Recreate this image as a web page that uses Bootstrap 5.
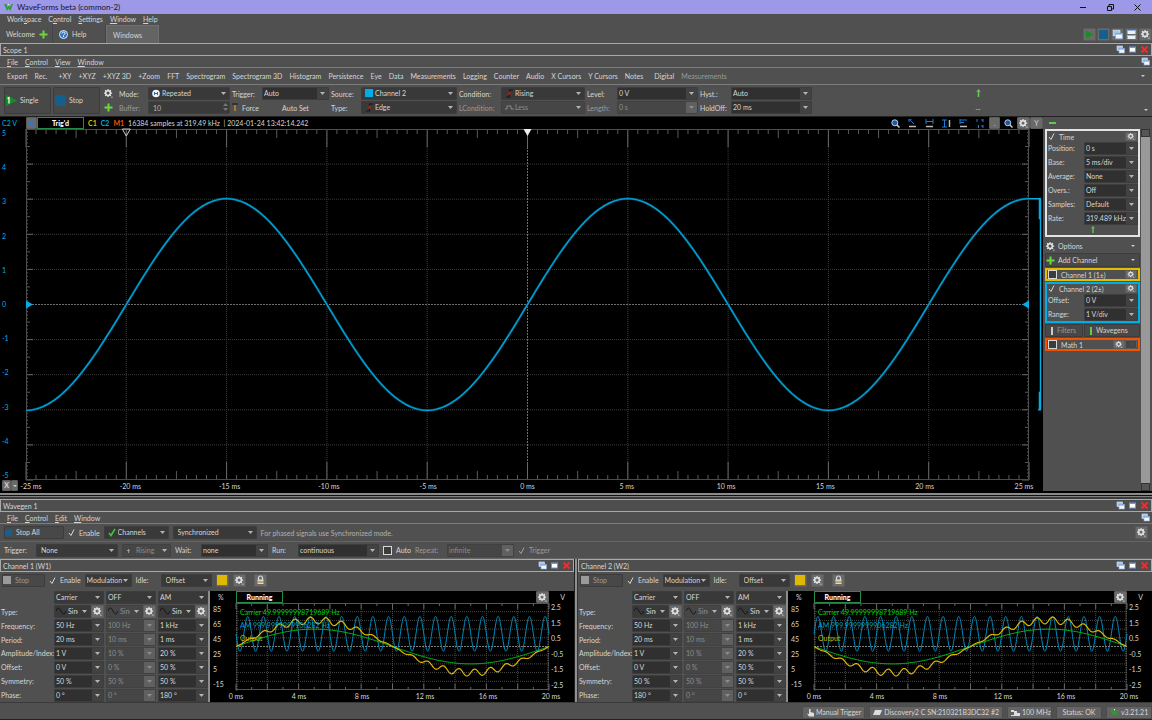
<!DOCTYPE html>
<html lang="en" data-bs-theme="dark">
<head>
<meta charset="utf-8">
<meta name="viewport" content="width=device-width, initial-scale=1">
<title>WaveForms beta (common-2)</title>
<link href="https://cdn.jsdelivr.net/npm/bootstrap@5.3.0/dist/css/bootstrap.min.css" rel="stylesheet">
<style>
:root{--bg:#505050;--line:#7c7c7c;--edge:#a8a8a8;--fg:#d6d6d6;--dim:#9a9a9a;--field:#303030;--cyan:#00aee6;--yellow:#e6bb00}
body{background:var(--bg);color:var(--fg);font:7px/12px Lato,"Liberation Sans",sans-serif;min-height:100vh}
svg{display:block;flex:none}
a{color:inherit;text-decoration:none}
button,input,select{font:inherit;color:inherit}
.ico{width:9px;height:9px}
.titlebar{height:14px;background:#9e98e8;color:#15152a;font-size:8px;padding-right:1px}
.titlebar button{background:none;border:0;width:27px;padding:0;color:#111}
.menu-row{height:12px;padding:0 2px 0 7px;gap:7px}
.menu-row.app-menu{height:11px;line-height:11px}
.menu-row.ruled{border-bottom:1px solid var(--line)}
.tab-row{height:18px}
.tab-row .nav-link{padding:0 6px;color:inherit;border-right:1px solid #444;width:53px;border-radius:0}
.tab-row .nav-link.active{background:#646464;border:1px solid #707070;border-bottom:0}
.tab-tools{gap:1px}
.dock-title{height:13px;border:1px solid var(--edge);padding:0 2px;background:#4e4e4e;font-size:7px}
.dock-icons{gap:3px}
.dock-icons button,.plain-btn{border:0;background:none;padding:0}
.tool-row{height:17px;border-bottom:1px solid var(--line);padding:0 7px}
.tool-list{width:720px}
.tool-list button{border:0;background:none;padding:0}
.dim{color:var(--dim)}
.btn.app-btn{--bs-btn-padding-x:4px;--bs-btn-padding-y:0;--bs-btn-font-size:7px;--bs-btn-border-radius:1px;line-height:11px;height:13px;color:var(--fg);background:#484848;border:1px solid #3c3c3c;text-align:left}
.btn.app-btn.dim{color:var(--dim)}
.btn.sq{width:13px;padding:0;display:flex;align-items:center;justify-content:center;background:#6a6a6a;border-color:#5c5c5c}
.btn.low{height:12px}
.btn.slim{width:11px}
.form-select,.form-control{height:13px;min-height:0;padding:0 12px 0 4px;font-size:7px;line-height:11px;border:1px solid #3d3d3d;border-radius:1px;color:var(--fg);background-color:#393939;
 background-image:url("data:image/svg+xml,%3Csvg xmlns='http://www.w3.org/2000/svg' viewBox='0 0 5 3'%3E%3Cpath d='M0 0h5L2.5 3z' fill='%23b4b4b4'/%3E%3C/svg%3E");background-size:5px 3px;background-position:right 3px center;background-repeat:no-repeat}
.form-control{padding-right:2px;background-image:none}
.form-select.tight{padding:0 8px 0 1px}
.form-select.combo{background-color:var(--field);padding-left:1px;background-image:url("data:image/svg+xml,%3Csvg xmlns='http://www.w3.org/2000/svg' viewBox='0 0 11 13'%3E%3Cpath d='M0 0h11v13H0z' fill='%23424242'/%3E%3Cpath d='M3 5h5L5.500 8z' fill='%23b4b4b4'/%3E%3C/svg%3E");background-size:11px 13px;background-position:right center}
.form-select:disabled,.form-control:disabled{color:#8c8c8c;background-color:#464646;border-color:#414141}
.form-control:disabled{background-color:#3a3a3a;color:#b4b4b4}
.form-select.combo:disabled{background-color:#464646;background-image:url("data:image/svg+xml,%3Csvg xmlns='http://www.w3.org/2000/svg' viewBox='0 0 11 13'%3E%3Cpath d='M0 0h11v13H0z' fill='%23606060'/%3E%3Cpath d='M3 5h5L5.500 8z' fill='%238c8c8c'/%3E%3C/svg%3E")}
.with-ico{position:relative}
.with-ico>svg{position:absolute;left:4px;top:2px}
.with-ico>svg.spin{left:auto;right:2px;top:1px}
.with-ico .form-select{padding-left:13px}
.tick{appearance:none;width:7px;height:9px;margin:0;background:none;flex:none;background-image:url("data:image/svg+xml,%3Csvg xmlns='http://www.w3.org/2000/svg' viewBox='0 0 7 9'%3E%3Cpath d='M1 5l2 2.500L6 1.500' stroke='%23d6d6d6' fill='none'/%3E%3C/svg%3E")}
.tick.off{opacity:.6}
.boxed{appearance:none;width:9px;height:9px;margin:0;border:1px solid #d8d8d8;background:#3c3c3c;flex:none}
.scope-ctl{height:31px;padding:1px 4px;gap:2px}
.btn.big{--bs-btn-padding-x:1px;width:47px;height:27px;display:flex;align-items:center;gap:3px}
.scope-grid{display:grid;grid-template-columns:13px 27px 82px 28px 67px 28px 96px 40px 84px 28px 81px 29px 81px;column-gap:2px;row-gap:1px;align-items:center;margin-left:2px}
.black{background:#000}
.scope-main{flex:1 1 auto;min-height:374px;border-top:1px solid #222}
.plot-head{height:12px}
.plot-tools{gap:8px}
.state{border:1px solid #258c46;width:47px;height:12px;line-height:10px;text-align:center;font-weight:900;color:#fff}
.name-c1{color:var(--yellow)}.name-c2{color:var(--cyan)}.name-m1{color:#f05400}
.y-axis{width:26px;padding-left:2px;color:var(--cyan)}
.y-axis span,.v-axis span{line-height:9px}
.strip{width:14px}
.fill-svg{width:100%;height:100%;overflow:visible;position:absolute;inset:0}
.x-row{height:11px;line-height:13px}
.x-row .labels{margin:0 -6px}
.x-btns{width:26px;padding-left:2px}
.x-btns .btn{width:9px;height:11px}
.x-btns .btn+.btn{width:7px}
.labels span{width:22px;text-align:center;white-space:nowrap}
.side{width:109px;padding-left:2px}
.side-scroll{width:9px;background:#999;margin-left:1px;margin-right:2px}
.side-scroll i{display:block;height:8px;background:#555;border:1px solid #333}
.grp{border:2px solid #e4e4e4;padding:1px 0}
.grp-yellow{border-color:var(--yellow);padding:0;margin:1px 0}.grp-blue{border-color:var(--cyan);padding:0}.grp-orange{border-color:#f05400;padding:0}
.grp-head{height:9px;padding:0 1px}
.grp-arrow{margin:1px auto}
.pair{display:grid;grid-template-columns:36px 1fr;align-items:center;height:14px;padding-left:1px}
.btn.wide{--bs-btn-padding-x:0;height:14px;width:100%;display:flex;align-items:center;gap:3px}
.btn.flat{background:none;border-color:transparent;margin-top:2px}
.side-pair{gap:1px;margin:1px 0}
.side-pair .btn:first-child{width:38px}
.btn.mini{width:12px;height:9px}
.btn.mini.dark{background:#444}
.splitter{height:8px;background:linear-gradient(#000 0 2px,#8a8a8a 2px 4px,#111 4px 5px,#808080 5px 6px,#3a3a3a 6px)}
.v-split{width:4px;background:linear-gradient(90deg,#222 0 1px,#909090 1px 3px,#333 3px)}
.wg-row{height:18px;padding:0 4px;border-bottom:1px solid #646464}
.wg-row.short{height:17px}
.wg-row label.w-s{width:22px}.wg-row label.w-m{width:28px}
.wg-hint{color:#b0b0b0}
.wg-chan{min-width:0;flex:1 1 0}
.ch-tools{height:19px;padding:0 2px 3px;gap:4px}
.ch-body{height:111px}
.ch-grid{display:grid;grid-template-columns:51px repeat(3,50px);grid-auto-rows:1fr;column-gap:2px;width:210px;padding-left:1px;align-items:center;border-right:2px solid #8c8c8c}
.ch-grid label{white-space:nowrap}
.ch-grid .with-ico{flex:1;min-width:0}
.ch-grid .with-ico .form-select{padding-right:12px}
.ch-grid .with-ico>svg{left:2px;top:2px}
.p-axis{width:26px;padding-left:3px}.v-axis{width:25px;padding-left:2px}
.ch-labels{height:12px;padding:0 12px 0 15px}
.trace-names{position:absolute;left:4px;top:3px;line-height:13px}
.status{height:18px;border-top:1px solid #3a3a3a;padding:3px 0 0;gap:4px;border-bottom:1px solid #222}
.status .app-btn{--bs-btn-padding-x:3px;background:#636363;border-color:#4c4c4c;white-space:nowrap;display:flex;align-items:center;gap:2px}
</style>
</head>
<body class="d-flex flex-column overflow-hidden">
<svg width="0" height="0" class="position-absolute" aria-hidden="true">
 <symbol id="gear" viewBox="0 0 10 10"><circle cx="4.500" cy="4.500" r="2.600" fill="none" stroke="#e2e6e8" stroke-width="1.700"/><path d="M4.500 0v2M4.500 7v2M0 4.500h2M7 4.500h2M1.300 1.300l1.200 1.200M6.500 6.500l1.200 1.200M7.700 1.300L6.500 2.500M1.300 7.700l1.200-1.200" stroke="#e2e6e8" stroke-width="1.300"/><path d="M7.500 8.500H10L8.800 10z" fill="#ccc"/></symbol>
 <symbol id="wins" viewBox="0 0 9 9"><rect x="1" y="1" width="5.500" height="4.500" fill="#a8c4ea" stroke="#dce8f8" stroke-width=".6"/><rect x="3" y="3.500" width="5.500" height="4.500" fill="#f2f6fc" stroke="#8aaede" stroke-width=".6"/><path d="M3 4h5.500" stroke="#6f9bd8"/></symbol>
 <symbol id="maxi" viewBox="0 0 9 9"><rect x="1" y="1.500" width="7" height="6" fill="#6f98d8"/><rect x="2" y="3" width="5" height="3.500" fill="#fff"/></symbol>
 <symbol id="cross" viewBox="0 0 9 9"><path d="M1.500 1.500l6 6M7.500 1.500l-6 6" stroke="#e23434" stroke-width="1.800"/></symbol>
 <symbol id="plus" viewBox="0 0 9 9"><path d="M4.500 .5v8M.5 4.500h8" stroke="#6ad83c" stroke-width="2"/></symbol>
 <symbol id="play" viewBox="0 0 9 9"><path d="M1 .5l7.500 4L1 8.500z" fill="#188c28"/></symbol>
 <symbol id="stop" viewBox="0 0 9 9"><path d="M0 0h9v9H0z" fill="#155f8f"/></symbol>
 <symbol id="up" viewBox="0 0 5 9"><path d="M2.500 0L5 3H3.400v6H1.600V3H0z" fill="#62c850"/></symbol>
 <symbol id="down" viewBox="0 0 4 2"><path d="M0 0h4L2 2z" fill="#ccc"/></symbol>
 <symbol id="lens" viewBox="0 0 9 9"><path d="M5.500 5.500l3 3" stroke="#ccc" stroke-width="1.500"/><circle cx="3.800" cy="3.800" r="3" fill="#2456a0" stroke="#b9cdea"/></symbol>
 <symbol id="lock" viewBox="0 0 9 10"><path d="M2.500 5V3a2 2 0 0 1 4 0v2" fill="none" stroke="#ddd" stroke-width="1.200"/><path d="M1.500 4.500h6v2h-6zM1.500 7.500h6v1.500h-6z" fill="#d8d8d8"/><path d="M1.500 6.500h6v1h-6z" fill="#d6b020"/></symbol>
 <symbol id="edge" viewBox="0 0 9 9"><path d="M1 8h3.500V1H8" fill="none" stroke="#181818" stroke-width="1.200"/><path d="M2.500 5.500L4.500 2l2 3.500z" fill="#c01818"/></symbol>
 <symbol id="sine" viewBox="0 0 11 9"><path d="M0 4.500C1.500 0 3.500 0 5.500 4.500S9.500 9 11 4.500" fill="none" stroke="#111"/></symbol>
 <symbol id="logo" viewBox="0 0 10 10"><path d="M0 1h2.500l1.500 4 1.500-3 1 3L8.500 1H10L7 9 5 6 3.500 9z" fill="#2c9c2c"/><path d="M4 1h2l-1 2z" fill="#f0f0f0"/></symbol>
</svg>

<header class="titlebar d-flex align-items-center">
 <svg class="mx-1" width="9" height="9"><use href="#logo"/></svg><span>WaveForms beta (common-2)</span>
 <div class="ms-auto d-flex">
  <button aria-label="Minimize"><svg class="mx-auto" width="7" height="7"><path d="M0 3.500h6" stroke="#111"/></svg></button>
  <button aria-label="Restore"><svg class="mx-auto" width="7" height="7"><path d="M.5 2.500h4v4h-4zM2 2V.5h4.500V5H5" fill="none" stroke="#111"/></svg></button>
  <button aria-label="Close"><svg class="mx-auto" width="7" height="7"><path d="M.5 .5l6 6M6.500 .5l-6 6" stroke="#111"/></svg></button>
 </div>
</header>
<nav class="menu-row app-menu d-flex"><a href="#">Work<u>s</u>pace</a><a href="#">C<u>o</u>ntrol</a><a href="#"><u>S</u>ettings</a><a href="#"><u>W</u>indow</a><a href="#"><u>H</u>elp</a></nav>
<div class="tab-row d-flex">
 <nav class="nav flex-nowrap">
  <a class="nav-link d-flex align-items-center gap-1" href="#">Welcome <svg class="ico"><use href="#plus"/></svg></a>
  <a class="nav-link d-flex align-items-center gap-1" href="#"><svg class="ico" viewBox="0 0 9 9"><circle cx="4.500" cy="4.500" r="4" fill="#2c78c8" stroke="#dce8f4"/><path d="M3 3.500c0-2 3-2 3 0 0 1-1.500 1-1.500 2M4.500 6v1" fill="none" stroke="#fff"/></svg>Help</a>
  <a class="nav-link active d-flex align-items-center" href="#">Windows</a>
 </nav>
 <div class="tab-tools ms-auto d-flex align-items-center">
  <button class="btn app-btn sq" aria-label="Run all"><svg class="ico"><use href="#play"/></svg></button>
  <button class="btn app-btn sq" aria-label="Stop all"><svg class="ico"><use href="#stop"/></svg></button>
  <button class="btn app-btn sq" aria-label="Cascade"><svg width="11" height="11"><use href="#wins"/></svg></button>
  <button class="btn app-btn sq" aria-label="Tile"><svg width="9" height="9"><path d="M.5 0h8v4h-8zM.5 5h8v4h-8z" fill="#e8f0fa"/><path d="M.5 .5h8M.5 5.500h8" stroke="#8cb0e0"/></svg></button>
  <button class="btn app-btn sq" aria-label="Settings"><svg class="ico"><use href="#gear"/></svg></button>
 </div>
</div>

<section class="d-flex flex-column flex-grow-1">
 <div class="dock-title d-flex align-items-center">Scope 1
  <div class="dock-icons ms-auto d-flex"><button aria-label="Undock"><svg class="ico"><use href="#wins"/></svg></button><button aria-label="Maximize"><svg class="ico"><use href="#maxi"/></svg></button><button aria-label="Close"><svg class="ico"><use href="#cross"/></svg></button></div>
 </div>
 <nav class="menu-row ruled d-flex"><a href="#"><u>F</u>ile</a><a href="#"><u>C</u>ontrol</a><a href="#"><u>V</u>iew</a><a href="#"><u>W</u>indow</a><button class="plain-btn ms-auto" aria-label="Windows"><svg class="ico"><use href="#wins"/></svg></button></nav>
 <div class="tool-row d-flex align-items-center">
  <div class="tool-list d-flex justify-content-between"><button>Export</button><button class="me-1">Rec.</button><button>+XY</button><button>+XYZ</button><button>+XYZ 3D</button><button>+Zoom</button><button>FFT</button><button>Spectrogram</button><button>Spectrogram 3D</button><button>Histogram</button><button>Persistence</button><button>Eye</button><button>Data</button><button>Measurements</button><button>Logging</button><button>Counter</button><button>Audio</button><button>X Cursors</button><button>Y Cursors</button><button class="me-1">Notes</button><button>Digital</button><button class="dim" disabled>Measurements</button></div>
  <svg class="ms-auto" width="4" height="2"><use href="#down"/></svg>
 </div>
 <div class="scope-ctl d-flex align-items-center">
  <button class="btn app-btn big"><svg width="11" height="11" viewBox="0 0 11 11"><path d="M0 0l11 5.500L0 11z" fill="#188c28"/><path d="M1.500 3.500L3 2.500v6" stroke="#fff" fill="none" stroke-width="1.200"/></svg>Single</button>
  <button class="btn app-btn big"><svg width="11" height="11"><use href="#stop"/></svg>Stop</button>
  <div class="scope-grid">
   <svg class="ico"><use href="#gear"/></svg><label for="mode">Mode:</label><div class="with-ico"><select id="mode" class="form-select"><option>Repeated</option></select><svg width="8" height="9" viewBox="0 0 8 9"><circle cx="4" cy="4.500" r="3.800" fill="#f2f2f2"/><path d="M2.500 3v3M5.500 3v3M2.500 4.500h3" stroke="#2c64b8"/></svg></div>
   <label for="trg">Trigger:</label><select id="trg" class="form-select combo"><option>Auto</option></select>
   <label for="src">Source:</label><div class="with-ico"><select id="src" class="form-select"><option>Channel 2</option></select><svg width="8" height="8"><path d="M0 0h8v8H0z" fill="#00aee6"/></svg></div>
   <label for="cond">Condition:</label><div class="with-ico"><select id="cond" class="form-select"><option>Rising</option></select><svg class="ico"><use href="#edge"/></svg></div>
   <label for="lvl">Level:</label><select id="lvl" class="form-select combo"><option>0 V</option></select>
   <label for="hyst">Hyst.:</label><select id="hyst" class="form-select combo"><option>Auto</option></select>
   <svg class="ico"><use href="#plus"/></svg><label for="buf" class="dim">Buffer:</label><div class="with-ico"><input id="buf" class="form-control" value="10" disabled><svg class="spin" width="5" height="10"><path d="M0 4l2.500-3L5 4zM0 6l2.500 3L5 6z" fill="#777"/></svg></div>
   <button class="plain-btn d-flex gap-1"><svg width="6" height="10"><path d="M0 1h6v2H0z" fill="#333"/><path d="M2 3h2v6H2z" fill="#a57a38"/></svg>Force</button><button class="plain-btn">Auto Set</button>
   <label for="type">Type:</label><div class="with-ico"><select id="type" class="form-select"><option>Edge</option></select><svg class="ico"><use href="#edge"/></svg></div>
   <label for="lc" class="dim">LCondition:</label><div class="with-ico"><select id="lc" class="form-select" disabled><option>Less</option></select><svg class="ico" viewBox="0 0 9 9"><path d="M0 6h2V3h4v3h3" fill="none" stroke="#888"/></svg></div>
   <label for="len" class="dim">Length:</label><select id="len" class="form-select combo" disabled><option>0 s</option></select>
   <label for="hold">HoldOff:</label><select id="hold" class="form-select combo"><option>20 ms</option></select>
  </div>
  <div class="flex-grow-1 d-flex flex-column align-items-center gap-1"><svg width="5" height="8"><use href="#up"/></svg><span>...</span></div>
  <svg class="align-self-end mb-1" width="4" height="2"><use href="#down"/></svg>
 </div>

 <div class="scope-main d-flex">
  <div class="black flex-grow-1 d-flex flex-column">
   <div class="plot-head d-flex align-items-center">
    <span class="y-axis">C2 V</span>
    <button class="btn app-btn sq low slim" aria-label="Collapse"><svg width="7" height="9"><path d="M5.500 1L1.500 4.500l4 3.500" fill="none" stroke="#2478e0" stroke-width="1.600"/></svg></button>
    <span class="state">Trig'd</span>
    <b class="ms-1 name-c1">C1</b><b class="ms-1 name-c2">C2</b><b class="mx-1 name-m1">M1</b>
    <span>16384 samples at 319.49 kHz &nbsp;| 2024-01-24 13:42:14.242</span>
    <div class="plot-tools ms-auto d-flex align-items-center">
     <svg class="ico"><use href="#lens"/></svg>
     <svg class="ico"><path d="M1 0l5 5M1 3V0h3" stroke="#1c7cd8" fill="none"/><path d="M1 7.500h7" stroke="#bbb" stroke-width="1.500"/></svg>
     <svg class="ico"><path d="M1 0v5M8 0v5M1 2.500h7" stroke="#1c7cd8"/><path d="M1 7.500h7" stroke="#bbb" stroke-width="1.500"/></svg>
     <svg class="ico"><path d="M0 1h5M0 8h5M2.500 1v7" stroke="#1c7cd8"/><path d="M7.500 1v7" stroke="#bbb" stroke-width="1.500"/></svg>
     <svg class="ico"><path d="M1 0v5M1 1h7M1 3.500h4" stroke="#1c7cd8"/><path d="M1 7.500h7" stroke="#bbb" stroke-width="1.500"/></svg>
     <svg class="ico"><path d="M1 0v3M7 0v3M2.500 6v3M7 6v3M5 1h2M5 7h2" stroke="#1c7cd8"/></svg>
    </div>
    <button class="btn app-btn sq low slim ms-1" aria-label="More">.</button>
    <svg class="ico mx-1"><use href="#lens"/></svg>
    <button class="btn app-btn sq low" aria-label="Plot options"><svg class="ico"><use href="#gear"/></svg></button>
    <button class="btn app-btn sq low" aria-label="Y axis">Y</button>
   </div>
   <div class="d-flex flex-grow-1">
    <div class="y-axis d-flex flex-column justify-content-between"><span>5</span><span>4</span><span>3</span><span>2</span><span>1</span><span>0</span><span>-1</span><span>-2</span><span>-3</span><span>-4</span><span>-5</span></div>
    <div class="flex-grow-1 position-relative"><svg class="fill-svg" id="scope" viewBox="0 0 1003 350" preserveAspectRatio="none"></svg></div>
    <div class="strip position-relative"><svg class="fill-svg" viewBox="0 0 14 350" preserveAspectRatio="none"><path d="M0 69.500H12M11.500 70V280M9 280h3M10.500 70v20M10.500 262v18" stroke="#00aee6" fill="none" stroke-width="1.500"/></svg></div>
   </div>
   <div class="x-row d-flex"><div class="x-btns d-flex"><button class="btn app-btn sq fw-bold">X</button><button class="btn app-btn sq" aria-label="X axis menu"><svg width="4" height="2"><use href="#down"/></svg></button></div>
    <div class="labels flex-grow-1 d-flex justify-content-between"><span>-25 ms</span><span>-20 ms</span><span>-15 ms</span><span>-10 ms</span><span>-5 ms</span><span>0 ms</span><span>5 ms</span><span>10 ms</span><span>15 ms</span><span>20 ms</span><span>25 ms</span></div><div class="strip"></div></div>
  </div>
  <aside class="side d-flex flex-column">
   <div class="plot-head d-flex align-items-center ps-1"><svg width="7" height="3"><path d="M0 0h7v2H0z" fill="#62c850"/></svg></div>
   <div class="d-flex flex-grow-1">
    <div class="flex-grow-1">
     <div class="grp">
      <div class="grp-head d-flex align-items-center gap-1"><input class="tick" type="checkbox" id="time" checked><label for="time">Time</label><button class="btn app-btn sq mini ms-auto" aria-label="Time options"><svg width="8" height="7"><use href="#gear"/></svg></button></div>
      <div class="pair"><label for="t1">Position:</label><select id="t1" class="form-select combo"><option>0 s</option></select></div>
      <div class="pair"><label for="t2">Base:</label><select id="t2" class="form-select combo"><option>5 ms/div</option></select></div>
      <div class="pair"><label for="t3">Average:</label><select id="t3" class="form-select combo"><option>None</option></select></div>
      <div class="pair"><label for="t4">Overs.:</label><select id="t4" class="form-select combo"><option>Off</option></select></div>
      <div class="pair"><label for="t5">Samples:</label><select id="t5" class="form-select combo"><option>Default</option></select></div>
      <div class="pair"><label for="t6">Rate:</label><select id="t6" class="form-select combo pe-0"><option>319.489 kHz</option></select></div>
      <svg class="grp-arrow" width="4" height="7"><use href="#up"/></svg>
     </div>
     <button class="btn app-btn wide flat"><svg class="ico"><use href="#gear"/></svg>Options<svg class="ms-auto me-1" width="4" height="2"><use href="#down"/></svg></button>
     <button class="btn app-btn wide"><svg class="ico"><use href="#plus"/></svg>Add Channel<svg class="ms-auto me-1" width="4" height="2"><use href="#down"/></svg></button>
     <div class="grp grp-yellow"><div class="grp-head d-flex align-items-center"><input class="boxed me-1" type="checkbox" id="c1"><label for="c1">Channel 1 (1±)</label><button class="btn app-btn sq mini ms-auto" aria-label="Channel 1 options"><svg width="8" height="7"><use href="#gear"/></svg></button></div></div>
     <div class="grp grp-blue"><div class="grp-head d-flex align-items-center gap-1"><input class="tick" type="checkbox" id="c2" checked><label for="c2">Channel 2 (2±)</label><button class="btn app-btn sq mini ms-auto" aria-label="Channel 2 options"><svg width="8" height="7"><use href="#gear"/></svg></button></div>
      <div class="pair"><label for="o2">Offset:</label><select id="o2" class="form-select combo"><option>0 V</option></select></div>
      <div class="pair"><label for="r2">Range:</label><select id="r2" class="form-select combo"><option>1 V/div</option></select></div>
     </div>
     <div class="side-pair d-flex"><button class="btn app-btn dim d-flex gap-1 align-items-center"><svg width="3" height="8"><path d="M1 0h2v8H1z" fill="#ccc"/></svg>Filters</button><button class="btn app-btn d-flex gap-1 align-items-center flex-grow-1"><svg width="3" height="8"><path d="M1 0h2v8H1z" fill="#62c850"/></svg>Wavegens</button></div>
     <div class="grp grp-orange"><div class="grp-head d-flex align-items-center"><input class="boxed me-1" type="checkbox" id="m1"><label for="m1">Math 1</label><button class="btn app-btn sq mini ms-auto" aria-label="Math options"><svg width="8" height="7"><use href="#gear"/></svg></button><button class="btn app-btn sq mini dark" aria-label="Remove"><svg width="7" height="7"><path d="M1 1l5 5M6 1L1 6" stroke="#a03030"/></svg></button></div></div>
    </div>
    <div class="side-scroll d-flex flex-column justify-content-between"><i></i><i></i></div>
   </div>
  </aside>
 </div>
</section>
<div class="splitter"></div>

<section>
 <div class="dock-title d-flex align-items-center">Wavegen 1
  <div class="dock-icons ms-auto d-flex"><button aria-label="Undock"><svg class="ico"><use href="#wins"/></svg></button><button aria-label="Maximize"><svg class="ico"><use href="#maxi"/></svg></button><button aria-label="Close"><svg class="ico"><use href="#cross"/></svg></button></div>
 </div>
 <nav class="menu-row ruled d-flex"><a href="#"><u>F</u>ile</a><a href="#"><u>C</u>ontrol</a><a href="#"><u>E</u>dit</a><a href="#"><u>W</u>indow</a><button class="plain-btn ms-auto" aria-label="Windows"><svg class="ico"><use href="#wins"/></svg></button></nav>
 <div class="wg-row d-flex align-items-center gap-1">
  <button class="btn app-btn d-flex align-items-center gap-1 ps-0" style="width:60px"><svg width="7" height="7"><use href="#stop"/></svg>Stop All</button>
  <input class="tick" type="checkbox" id="wen" checked><label for="wen">Enable</label>
  <div class="with-ico" style="width:65px"><select class="form-select" aria-label="Channels"><option>Channels</option></select><svg width="8" height="9"><path d="M1 5l2 2.500L7 1" fill="none" stroke="#38c838" stroke-width="1.600"/></svg></div>
  <select class="form-select" style="width:84px" aria-label="Synchronization"><option>Synchronized</option></select>
  <span class="wg-hint">For phased signals use Synchronized mode.</span>
  <button class="btn app-btn sq ms-auto" aria-label="Options"><svg class="ico"><use href="#gear"/></svg></button>
 </div>
 <div class="wg-row short d-flex align-items-center gap-1">
  <label for="w1" class="w-m">Trigger:</label><select id="w1" class="form-select" style="width:82px"><option>None</option></select>
  <div class="with-ico" style="width:49px"><select class="form-select" disabled aria-label="Edge"><option>Rising</option></select><svg width="5" height="9"><path d="M1 4.500h3M2.500 3v4" stroke="#999"/></svg></div>
  <label for="w2" class="w-s">Wait:</label><select id="w2" class="form-select combo" style="width:67px"><option>none</option></select>
  <label for="w3" class="w-s">Run:</label><select id="w3" class="form-select combo" style="width:81px"><option>continuous</option></select>
  <input class="boxed" type="checkbox" id="w4"><label for="w4">Auto</label>
  <label for="w5" class="dim w-m">Repeat:</label><select id="w5" class="form-select combo" disabled style="width:67px"><option>infinite</option></select>
  <input class="tick off" type="checkbox" id="w6" checked disabled><label for="w6" class="dim">Trigger</label>
 </div>
 <div class="d-flex" id="channels"></div>
</section>
<footer class="status d-flex justify-content-end align-items-center">
 <button class="btn app-btn"><svg width="8" height="9"><path d="M3 1h1.500v3L8 5v3.500H3L1 5.500l2 .5z" fill="#ddd"/></svg>Manual Trigger</button>
 <button class="btn app-btn"><svg width="9" height="7"><path d="M2 1h7L7 6H0z" fill="#ddd"/></svg>Discovery2 C SN:210321B3DC32 #2</button>
 <button class="btn app-btn" style="width:45px"><svg width="9" height="8"><path d="M0 6h3V2h3v2h3v3H0zM0 1h3v2H0z" fill="#ddd"/></svg>100 MHz</button>
 <button class="btn app-btn justify-content-center" style="width:46px">Status: OK</button>
 <button class="btn app-btn" style="width:46px"><svg width="9" height="9"><use href="#logo"/></svg>v3.21.21</button>
</footer>

<script src="https://cdn.jsdelivr.net/npm/bootstrap@5.3.0/dist/js/bootstrap.bundle.min.js"></script>
<script>
const TAU = Math.PI * 2;
const stroke = (d, color, extra = '') => `<path d="${d}" fill="none" stroke="${color}" vector-effect="non-scaling-stroke" ${extra}/>`;
function curve(w, n, f) {
  let d = '';
  for (let i = 0; i <= n; i++) d += (i ? 'L' : 'M') + (w * i / n).toFixed(2) + ' ' + f(i / n).toFixed(2);
  return d;
}

// Main scope graticule and trace
(() => {
  const W = 1003, H = 350, X = W / 10, Y = H / 10;
  let faint = '', minor = '', major = '';
  for (let i = 1; i < 10; i++) { if (i !== 5) faint += `M${i * X} 0V${H}M0 ${i * Y}H${W}`; }
  for (let i = 0; i <= 100; i++) {
    const x = i * X / 10, y = i * Y / 10;
    if (i % 10 === 0) major += `M${x} 0v18M${x} ${H}v-18M0 ${y}h7M${W} ${y}h-7`;
    else if (i % 5 === 0) minor += `M${x} 0v9M${x} ${H}v-9M0 ${y}h4M${W} ${y}h-4`;
    else minor += `M${x} 0v5M${x} ${H}v-5M0 ${y}h2M${W} ${y}h-2`;
  }
  const wave = curve(W, 500, t => 175 - 105.5 * Math.sin(TAU * (t - .5) * 2.5));
  document.getElementById('scope').innerHTML =
    stroke(faint, '#3c3c3c', 'stroke-dasharray="1 1"') +
    stroke(`M0 175H${W}M${W / 2} 0V${H}`, '#707070', 'stroke-dasharray="2 1"') +
    stroke(minor, '#5a5a5a') + stroke(major, '#686868') +
    stroke(`M0 .5H${W}M0 ${H - .5}H${W}M.5 0V${H}M${W - .5} 0V${H}`, '#4c4c4c') +
    stroke(wave, '#00506c', 'stroke-width="2.400"') + stroke(wave, '#00a6dc', 'stroke-width="1.200"') +
    `<path d="M0 171l7 4-7 4zM${W} 171l-7 4 7 4z" fill="#00aee6"/><path d="M497.500 0h8l-4 7z" fill="#eee"/>` +
    stroke('M96.300 0h8l-4 7z', '#ccc');
})();

// Waveform generator channels
const ROWS = [
  ['Frequency:', '50 Hz', '100 Hz', '1 kHz'], ['Period:', '20 ms', '10 ms', '1 ms'],
  ['Amplitude/Index:', '1 V', '10 %', '20 %'], ['Offset:', '0 V', '0 %', '50 %'],
  ['Symmetry:', '50 %', '50 %', '50 %']];
function preview(sign) {
  const W = 314, H = 86;
  let g = '', s = '';
  for (let i = 1; i < 10; i++) if (i !== 5) g += `M0 ${i * H / 10}H${W}`;
  for (let i = 1; i < 10; i++) g += `M${i * W / 10} 0V${H}`;
  for (let i = 0; i <= 100; i++) { const l = i % 10 ? (i % 5 ? 1 : 3) : 6; s += `M${i * W / 100} 0v${l}M${i * W / 100} ${H}v${-l}`; }
  for (let i = 0; i <= 50; i++) s += `M0 ${i * H / 50}h1.500M${W} ${i * H / 50}h-1.500`;
  const car = t => sign * Math.sin(TAU * t), am = t => -sign * Math.sin(TAU * 20 * t);
  return stroke(g, '#484848', 'stroke-dasharray="1 1"') + stroke(s, '#666') +
    stroke(`M0 43H${W}`, '#808080', 'stroke-dasharray="2 1"') + stroke(`M0 .5H${W}M0 ${H - .5}H${W}`, '#555') +
    stroke(curve(W, 800, t => 30.5 - 17.2 * am(t)), '#008cc0') +
    stroke(curve(W, 200, t => 43 - 17.2 * car(t)), '#00b818') +
    stroke(curve(W, 600, t => 43 - 17.2 * car(t) * (1.5 + .2 * am(t))), '#e0b800', 'stroke-width="1.200"');
}
function channel(n, sign, phases) {
  const sel = (v, c, row, dis) => `<select class="form-select combo" id="g${n}${row}${c}" aria-label="${row}" ${dis ? 'disabled' : ''}><option>${v}</option></select>`;
  const line = r => `<label for="g${n}${r[0].slice(0, 3)}0">${r[0]}</label>` + [0, 1, 2].map(c => sel(r[c + 1], c, r[0].slice(0, 3), c === 1)).join('');
  const gear = '<svg class="ico"><use href="#gear"/></svg>';
  const axis = a => a.map(v => `<span>${v}</span>`).join('');
  return `<div class="wg-chan">
  <div class="dock-title d-flex align-items-center">Channel ${n} (W${n})
   <div class="dock-icons ms-auto d-flex">${['wins', 'maxi', 'cross'].map(i => `<button aria-label="${i}"><svg class="ico"><use href="#${i}"/></svg></button>`).join('')}</div></div>
  <div class="ch-tools d-flex align-items-center">
   <button class="btn app-btn dim d-flex align-items-center gap-1 ps-0" style="width:43px"><svg width="8" height="8"><path d="M0 0h8v8H0z" fill="#9a9a9a"/></svg>Stop</button>
   <input class="tick" type="checkbox" id="en${n}" checked><label for="en${n}">Enable</label>
   <select class="form-select tight" style="width:47px" aria-label="Mode"><option>Modulation</option></select>
   <label for="idle${n}" style="width:21px">Idle:</label><select class="form-select" id="idle${n}" style="width:51px"><option>Offset</option></select>
   <button class="btn app-btn sq" aria-label="Color"><svg width="10" height="10"><path d="M0 0h10v10H0z" fill="#e0b800"/></svg></button>
   <button class="btn app-btn sq" aria-label="Options">${gear}</button>
   <button class="btn app-btn sq ms-1" aria-label="Lock"><svg width="9" height="10"><use href="#lock"/></svg></button>
  </div>
  <div class="ch-body d-flex">
   <div class="ch-grid"><span></span>
    ${['Carrier', 'OFF', 'AM'].map(v => `<select class="form-select tight" aria-label="Source"><option>${v}</option></select>`).join('')}
    <label for="ty${n}0">Type:</label>
    ${[0, 1, 2].map(c => `<div class="d-flex"><div class="with-ico"><select class="form-select" id="ty${n}${c}" aria-label="Type" ${c === 1 ? 'disabled' : ''}><option>Sine</option></select><svg width="10" height="8"><use href="#sine"/></svg></div><button class="btn app-btn sq" aria-label="Wave options">${gear}</button></div>`).join('')}
    ${ROWS.map(line).join('')}${line(['Phase:', ...phases])}
   </div>
   <div class="black flex-grow-1 d-flex flex-column">
    <div class="plot-head d-flex align-items-center"><span class="p-axis ps-2">%</span><span class="state">Running</span><button class="btn app-btn sq low ms-auto" aria-label="Plot options">${gear}</button><span class="v-axis text-center">V</span></div>
    <div class="d-flex flex-grow-1">
     <div class="p-axis d-flex flex-column justify-content-between">${axis([85, 65, 45, 25, 5, -15])}</div>
     <div class="flex-grow-1 position-relative"><svg class="fill-svg" viewBox="0 0 314 86" preserveAspectRatio="none">${preview(sign)}</svg>
      <div class="trace-names"><div style="color:#00d000">Carrier 49.99999998719689 Hz</div><div style="color:#00a0d8">AM 999.9999999906282 Hz</div><div style="color:#d8ac00">Output</div></div></div>
     <div class="v-axis d-flex flex-column justify-content-between">${axis(['2.5', '1.5', '0.5', '-0.5', '-1.5', '-2.5'])}</div>
    </div>
    <div class="labels ch-labels d-flex justify-content-between">${axis(['0 ms', '4 ms', '8 ms', '12 ms', '16 ms', '20 ms'])}</div>
   </div>
  </div></div>`;
}
document.getElementById('channels').innerHTML =
  channel(1, 1, ['0 °', '0 °', '180 °']) + '<div class="v-split"></div>' + channel(2, -1, ['180 °', '0 °', '0 °']);
</script>
</body>
</html>
